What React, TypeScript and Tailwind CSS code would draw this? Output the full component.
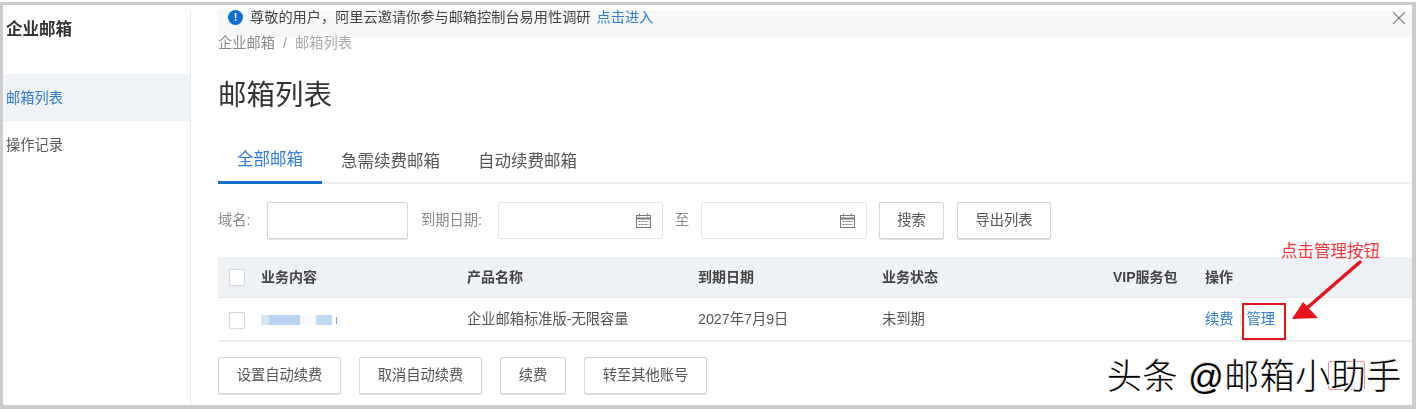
import React from "react";

function Calendar() {
  return (
    <svg width="15" height="15" viewBox="0 0 15 15" fill="none" stroke="#777" strokeWidth="1">
      <rect x="0.5" y="2.5" width="14" height="12" />
      <path d="M0.5 5.5h14" strokeWidth="2" />
      <path d="M3.5 0.5v3M11.5 0.5v3" />
      <path d="M2.5 8.5h10M2.5 11.5h10" strokeDasharray="2 1" />
    </svg>
  );
}

function Btn({ children, className }: { children: React.ReactNode; className: string }) {
  return (
    <div className={`h-[37px] flex items-center justify-center border border-[#d5d5d5] rounded-[2px] bg-white text-[14.25px] text-[#555] shadow-[0_1px_1px_#ddd] ${className}`}>
      {children}
    </div>
  );
}

function Check() {
  return <div className="w-[16px] h-[17px] border border-[#d8d8d8] rounded-[2px] bg-white shadow-[0_0_1px_#ccc]" />;
}

export default function App() {
  return (
    <div className="relative w-[1416px] h-[409px] bg-white overflow-hidden [font-family:'Liberation_Sans','Noto_Sans_CJK_SC',sans-serif]">
      <div className="mt-[2px] h-[407px] border-l-[3px] border-r-[4px] border-t-[3px] border-b-[4px] border-[#cdcbcb] flex pt-[5px]">
        <aside className="w-[188px] h-full border-r border-r-[#e8e8e8] shrink-0 blur-[0.5px]">
          <div className="pl-[3px] pt-[7px] h-[64px] text-[16.5px] leading-[24px] font-bold text-[#333]">企业邮箱</div>
          <div className="h-[47px] bg-[#eff2f7] pl-[3px] pt-[3px] flex items-center text-[14.25px] text-[#2d7bd3]">邮箱列表</div>
          <div className="h-[47px] pl-[3px] pt-[3px] flex items-center text-[14.25px] text-[#555]">操作记录</div>
        </aside>
        <main className="flex-1 pl-[27px] min-w-0 blur-[0.5px]">
          <div className="h-[27px] bg-[#f7f8fa] flex items-center pl-[10px] pr-[7px] overflow-hidden">
            <div className="w-[15px] h-[15px] -mt-[12px] rounded-full bg-[#0f6fcf] text-white text-[11px] leading-[15px] font-bold text-center shrink-0">!</div>
            <span className="ml-[7px] -mt-[12px] text-[14.2px] text-[#444] whitespace-nowrap">尊敬的用户，阿里云邀请你参与邮箱控制台易用性调研</span>
            <span className="ml-[6px] -mt-[12px] text-[14.2px] text-[#2d7bd3] whitespace-nowrap">点击进入</span>
            <svg className="ml-auto -mt-[12px]" width="12" height="12" viewBox="0 0 12 12" stroke="#777" strokeWidth="1.1"><path d="M0 0l12 12M12 0L0 12" /></svg>
          </div>
          <div className="h-[12px] flex items-center text-[14.25px] leading-[12px] text-[#999] whitespace-nowrap">
            <span className="text-[#888]">企业邮箱</span>
            <span className="mx-[8px]">/</span>
            <span className="text-[#aaa]">邮箱列表</span>
          </div>
          <h1 className="mt-[28px] h-[36px] text-[28.5px] leading-[36px] text-[#333] font-normal">邮箱列表</h1>
          <div className="mt-[31px] h-[40px] border-b-[2px] border-b-[#eeeeee] flex items-start text-[16.5px]">
            <div className="w-[104px] h-[40px] border-b-[3px] border-b-[#0f6fcf] text-center text-[#2d7bd3] pt-[3px] leading-[24px] shrink-0">全部邮箱</div>
            <div className="ml-[19px] pt-[5px] leading-[24px] text-[#555]">急需续费邮箱</div>
            <div className="ml-[38px] pt-[5px] leading-[24px] text-[#555]">自动续费邮箱</div>
          </div>
          <div className="mt-[18px] h-[37px] flex items-center text-[14.25px] text-[#888]">
            <span className="w-[49px] shrink-0">域名:</span>
            <div className="w-[141px] h-[37px] border border-[#d5d5d5] rounded-[2px] shadow-[0_1px_1px_#e5e5e5] shrink-0" />
            <span className="ml-[13px] w-[77px] shrink-0">到期日期:</span>
            <div className="w-[165px] h-[37px] border border-[#e6e6e6] rounded-[2px] flex items-center justify-end pr-[11px] shrink-0"><Calendar /></div>
            <span className="ml-[12px] w-[26px] shrink-0">至</span>
            <div className="w-[166px] h-[37px] border border-[#e6e6e6] rounded-[2px] flex items-center justify-end pr-[11px] shrink-0"><Calendar /></div>
            <Btn className="ml-[12px] w-[65px] shrink-0">搜索</Btn>
            <Btn className="ml-[13px] w-[94px] shrink-0">导出列表</Btn>
          </div>
          <div className="mt-[18px] h-[41px] pt-[1px] bg-[#eef1f6] border-b border-b-[#e6e6e6] pl-[11px] grid grid-cols-[32px_206px_231px_184px_231px_92px_1fr] items-center text-[14px] font-bold text-[#444]">
            <Check />
            <span>业务内容</span>
            <span>产品名称</span>
            <span>到期日期</span>
            <span>业务状态</span>
            <span>VIP服务包</span>
            <span>操作</span>
          </div>
          <div className="h-[44px] pt-[2px] border-b-[2px] border-b-[#eeeeee] pl-[11px] grid grid-cols-[32px_206px_231px_184px_231px_92px_1fr] items-center text-[14.25px] text-[#555]">
            <Check />
            <div className="flex items-center h-[10px]">
              <div className="w-[8px] h-[10px] bg-[#d6e6f7]" />
              <div className="w-[31px] h-[10px] bg-[#b9d4f1]" />
              <div className="w-[16px] h-[10px] bg-[#f8fafd]" />
              <div className="w-[16px] h-[10px] bg-[#c2d9f3]" />
              <div className="ml-[4px] w-[1px] h-[7px] bg-[#6aa5e6]" />
            </div>
            <span>企业邮箱标准版-无限容量</span>
            <span>2027年7月9日</span>
            <span>未到期</span>
            <span />
            <div className="flex items-center text-[#2d7bd3] whitespace-nowrap">
              <span>续费</span>
              <span className="w-[1px] h-[12px] bg-[#e5e5e5] mx-[6px]" />
              <span>管理</span>
            </div>
          </div>
          <div className="mt-[15px] flex gap-[18px]">
            <Btn className="w-[123px]">设置自动续费</Btn>
            <Btn className="w-[123px]">取消自动续费</Btn>
            <Btn className="w-[66px]">续费</Btn>
            <Btn className="w-[123px]">转至其他账号</Btn>
          </div>
        </main>
      </div>

      {/* annotations laid over the screenshot */}
      <div className="absolute left-[1242px] top-[303px] w-[44px] h-[37px] border-2 border-[#e8141c]" />
      <div className="absolute left-[1281px] top-[240px] text-[16.5px] leading-[22px] text-[#f2383c] whitespace-nowrap">点击管理按钮</div>
      <svg className="absolute left-[1285px] top-[258px]" width="80" height="66" viewBox="0 0 80 66">
        <path d="M75 4L22 50" stroke="#e8141c" strokeWidth="3.5" strokeLinecap="round" />
        <path d="M7 61L18 44L33 60Z" fill="#e8141c" />
      </svg>
      <div className="absolute left-[1328px] top-[361px] w-[37px] h-[29px] border border-[#f08f8f] rounded-[2px]" />
      <div className="absolute left-[1107px] top-[356px] text-[35px] leading-[42px] tracking-[0.5px] font-light text-black whitespace-nowrap [text-shadow:1px_1px_0_#fff,-1px_-1px_0_#ddd]">头条 @邮箱小助手</div>
    </div>
  );
}
